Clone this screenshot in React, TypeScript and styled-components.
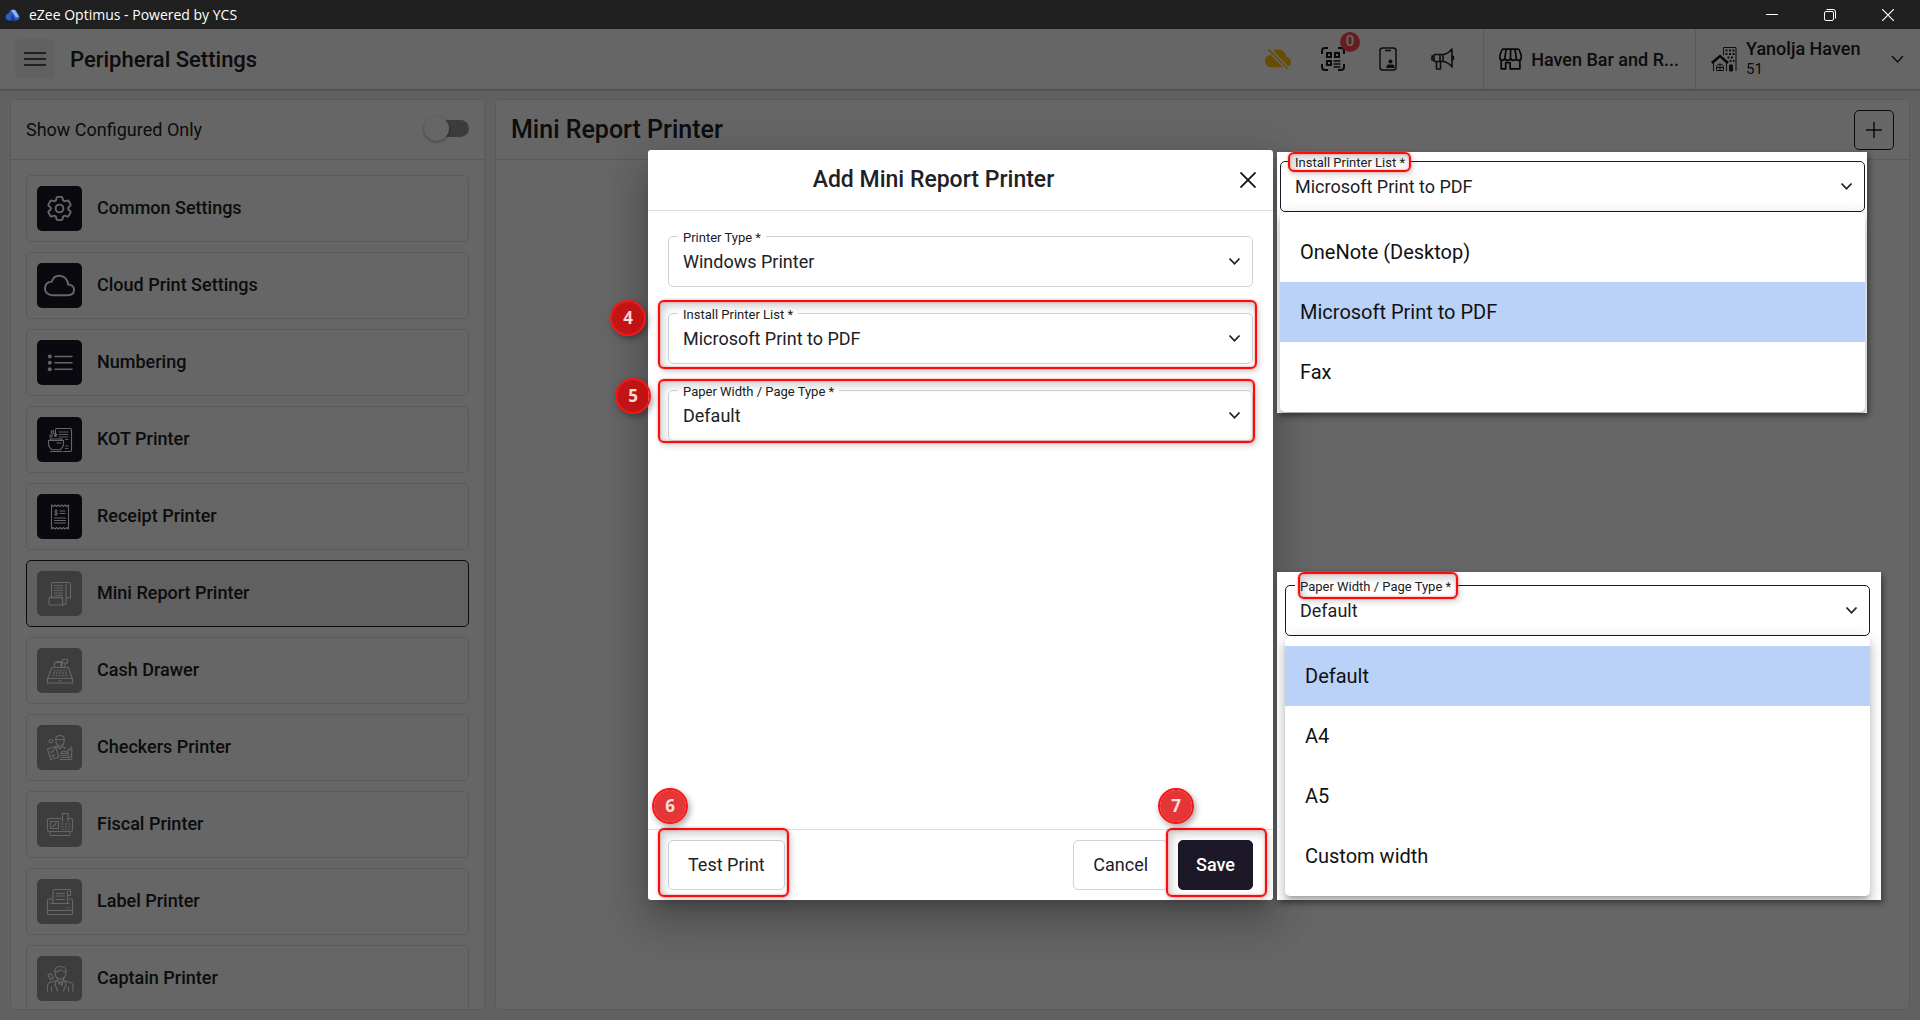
import React from "react";
import styled, { createGlobalStyle, css } from "styled-components";
import { BsCloudSlashFill } from "react-icons/bs";
import { HiOutlineCog6Tooth } from "react-icons/hi2";
import { IoCloudOutline } from "react-icons/io5";

const ink = "#1c1827";
const line = "#dee2e6";

const GlobalStyle = createGlobalStyle`
  *, *::before, *::after { box-sizing: border-box; }
  body { margin: 0; overflow: hidden; font-family: Roboto, "Liberation Sans", sans-serif; color: #202124; }
  button, input, select { font: inherit; color: inherit; }
  h1, h2, ul { margin: 0; padding: 0; }
  ul { list-style: none; }
`;

const Shell = styled.div`
  position: relative;
  display: flex;
  flex-direction: column;
  height: 100vh;
  background: #eef2f6;
`;

const TitleBar = styled.div`
  display: flex;
  align-items: center;
  flex: none;
  height: 29px;
  padding: 0 3px 0 5px;
  gap: 9px;
  background: #202020;
  color: #fff;
  font: 14px/28px "Open Sans", "Noto Sans", sans-serif;
`;

const TitleText = styled.span`
  flex: 1;
`;

const WindowControls = styled.div`
  display: flex;
`;

const WindowButton = styled.button`
  display: grid;
  place-items: center;
  width: 58px;
  height: 28px;
  padding: 0;
  border: 0;
  background: none;
`;

const Header = styled.header`
  display: flex;
  align-items: center;
  flex: none;
  height: 60px;
  padding-left: 15px;
  background: #fff;
  box-shadow: 0 1px 2px rgba(0, 0, 0, 0.3);
`;

const MenuButton = styled.button`
  display: grid;
  place-items: center;
  width: 40px;
  height: 40px;
  padding: 0;
  border: 0;
  border-radius: 5px;
  background: #f3f3f3;
`;

const PageTitle = styled.h1`
  flex: 1;
  padding-left: 15px;
  font-size: 22px;
  font-weight: 500;
`;

const HeaderIcons = styled.div`
  display: flex;
  padding-right: 13px;
`;

const HeaderIcon = styled.button`
  position: relative;
  display: grid;
  place-items: center;
  width: 55px;
  height: 60px;
  padding: 0;
  border: 0;
  background: none;
`;

const CountBadge = styled.span`
  position: absolute;
  top: 3px;
  right: 0;
  width: 20px;
  height: 20px;
  border-radius: 50%;
  background: #ff4a4f;
  color: #fff;
  font-size: 15px;
  font-weight: 500;
  line-height: 19px;
  text-align: center;
`;

const HeaderSection = styled.div<{ $width: number }>`
  display: flex;
  align-items: center;
  gap: 9px;
  width: ${(p) => p.$width}px;
  height: 60px;
  padding: 0 16px 0 15px;
  border-left: 1px solid ${line};
  font-size: 18px;
  font-weight: 500;
  white-space: nowrap;
`;

const OutletName = styled.span`
  flex: 1;
`;

const Account = styled.div`
  display: flex;
  flex-direction: column;
  flex: 1;
  line-height: 21px;
`;

const AccountCode = styled.span`
  font-size: 15px;
  font-weight: 400;
`;

const Main = styled.main`
  display: grid;
  grid-template-columns: 475px minmax(0, 1fr);
  gap: 10px;
  flex: 1;
  min-height: 0;
  padding: 10px;
`;

const Panel = styled.section`
  display: flex;
  flex-direction: column;
  min-height: 0;
  border: 1px solid ${line};
  border-radius: 5px;
  background: #fff;
  overflow: hidden;
`;

const PanelHead = styled.div`
  display: flex;
  align-items: center;
  justify-content: space-between;
  flex: none;
  height: 60px;
  padding: 0 15px;
  border-bottom: 1px solid ${line};
  font-size: 18px;
`;

const PanelTitle = styled.h2`
  font-size: 25px;
  font-weight: 500;
`;

const Switch = styled.input`
  appearance: none;
  position: relative;
  width: 40px;
  height: 17px;
  margin: 0 0 3px;
  border-radius: 9px;
  background: #979797;
  &::before {
    content: "";
    position: absolute;
    top: -4px;
    left: -5px;
    width: 25px;
    height: 25px;
    border-radius: 50%;
    background: #fff;
    box-shadow: 0 1px 3px rgba(0, 0, 0, 0.4);
  }
`;

const AddButton = styled.button`
  display: grid;
  place-items: center;
  width: 40px;
  height: 40px;
  padding: 0;
  border: 1px solid ${ink};
  border-radius: 5px;
  background: #fff;
`;

const DeviceList = styled.ul`
  display: flex;
  flex-direction: column;
  gap: 10px;
  padding: 15px;
`;

const DeviceButton = styled.button<{ $active?: boolean }>`
  display: flex;
  align-items: center;
  gap: 15px;
  width: 100%;
  height: 67px;
  padding: 0 10px;
  border: 1px solid ${(p) => (p.$active ? ink : line)};
  border-radius: 5px;
  background: ${(p) => (p.$active ? "#f0f0f0" : "#fff")};
  font-size: 18px;
  font-weight: 500;
`;

const DeviceName = styled.span`
  padding-bottom: 2px;
`;

const Tile = styled.span<{ $muted?: boolean }>`
  display: grid;
  place-items: center;
  width: 45px;
  height: 45px;
  border-radius: 5px;
  background: ${(p) => (p.$muted ? "#9a9a9a" : ink)};
  color: #fff;
`;

const Overlay = styled.div`
  position: absolute;
  inset: 29px 0 0;
  display: flex;
  justify-content: center;
  padding: 121px 0 120px 1px;
  background: rgba(0, 0, 0, 0.6);
`;

const Dialog = styled.div`
  position: relative;
  display: flex;
  flex-direction: column;
  width: 625px;
  border-radius: 3px;
  background: #fff;
  box-shadow: 0 11px 15px -7px rgba(0, 0, 0, 0.2), 0 24px 38px 3px rgba(0, 0, 0, 0.14), 0 9px 46px 8px rgba(0, 0, 0, 0.12);
`;

const DialogHead = styled.div`
  display: grid;
  grid-template-columns: 1fr 54px;
  align-items: center;
  height: 61px;
  border-bottom: 1px solid #dcdde0;
  text-align: center;
`;

const DialogTitle = styled.h2`
  font-size: 23px;
  font-weight: 500;
  line-height: 32px;
`;

const CloseButton = styled.button`
  display: grid;
  place-items: center;
  justify-self: end;
  width: 50px;
  height: 40px;
  padding: 0;
  border: 0;
  background: none;
`;

const DialogBody = styled.div`
  display: flex;
  flex-direction: column;
  flex: 1;
  gap: 26px;
  padding: 25px 20px;
`;

const DialogFoot = styled.div`
  display: flex;
  align-items: center;
  justify-content: space-between;
  height: 71px;
  padding: 0 20px;
  border-top: 1px solid #dcdde0;
`;

const ButtonGroup = styled.div`
  display: flex;
  gap: 10px;
`;

const Anchor = styled.div`
  position: relative;
`;

const ActionButton = styled.button<{ $solid?: boolean }>`
  height: 50px;
  padding: 0 ${(p) => (p.$solid ? 17 : 19)}px 2px;
  border: 1px solid ${(p) => (p.$solid ? ink : "#ced3da")};
  border-radius: 5px;
  background: ${(p) => (p.$solid ? ink : "#fff")};
  color: ${(p) => (p.$solid ? "#fff" : "#202124")};
  font-size: 18px;
  font-weight: ${(p) => (p.$solid ? 500 : 400)};
`;

const FieldBox = styled.div`
  position: relative;
  display: flex;
  align-items: center;
`;

const FieldLabel = styled.label`
  position: absolute;
  top: -6px;
  left: 10px;
  padding: 0 5px;
  background: #fff;
  font-size: 13px;
  line-height: 16px;
`;

const Select = styled.select<{ $open?: boolean }>`
  appearance: none;
  width: 100%;
  height: 51px;
  padding: 0 40px 0 14px;
  border: 1px solid ${(p) => (p.$open ? ink : "#ced3da")};
  border-radius: 5px;
  background: #fff;
  font-size: 18px;
`;

const SelectArrow = styled.svg`
  position: absolute;
  right: 12px;
  pointer-events: none;
`;

type Edges = { top: number; right: number; bottom: number; left: number };

const Highlight = styled.span<{ $edges: Edges }>`
  position: absolute;
  z-index: 1;
  ${({ $edges: e }) => css`
    top: ${-e.top}px;
    right: ${-e.right}px;
    bottom: ${-e.bottom}px;
    left: ${-e.left}px;
  `}
  border: 2px solid #f80c0c;
  border-radius: 6px;
  box-shadow: 0 0 2px #ff6a6a, 2px 3px 6px rgba(0, 0, 0, 0.16), inset 0 0 2px #ff6a6a, inset 3px 4px 10px rgba(0, 0, 0, 0.2);
  pointer-events: none;
`;

const Step = styled.span<{ $x: number; $y: number }>`
  position: absolute;
  z-index: 2;
  left: ${(p) => p.$x}px;
  top: ${(p) => p.$y}px;
  width: 36px;
  height: 36px;
  border: 2px solid #fb1212;
  border-radius: 50%;
  background: rgba(221, 0, 0, 0.79);
  background-clip: padding-box;
  box-shadow: 2px 3px 6px rgba(0, 0, 0, 0.35);
  color: rgba(255, 255, 255, 0.85);
  font: 700 17px/32px "Noto Sans", sans-serif;
  text-align: center;
`;

const Callout = styled.aside<{ $end?: boolean }>`
  position: absolute;
  left: calc(100% + 4px);
  width: ${(p) => (p.$end ? 604 : 590)}px;
  padding: ${(p) => (p.$end ? "13px 11px 4px 8px" : "9px 2px 1px 3px")};
  ${(p) => (p.$end ? "bottom: 0;" : "top: 2px;")}
  background: #fff;
  box-shadow: 2px 3px 6px rgba(0, 0, 0, 0.45);
`;

const Options = styled.ul`
  position: relative;
  padding: 10px 0;
  border-radius: 5px;
  background: #fff;
  box-shadow: 0 5px 5px -3px rgba(0, 0, 0, 0.2), 0 8px 10px 1px rgba(0, 0, 0, 0.14), 0 3px 14px 2px rgba(0, 0, 0, 0.12);
`;

const CalloutClip = styled.div`
  margin: -20px -11px -4px -8px;
  padding: 20px 11px 4px 8px;
  overflow: hidden;
`;

const ListCalloutClip = styled(CalloutClip)`
  margin: -20px -2px -1px -3px;
  padding: 20px 2px 1px 3px;
`;

const Option = styled.li<{ $selected?: boolean }>`
  height: 60px;
  padding-left: 20px;
  background: ${(p) => (p.$selected ? "#bad2f8" : "transparent")};
  color: #111;
  font-size: 20px;
  line-height: 60px;
`;

function Field({ id, label, value, options, open, edges, children }: {
  id: string;
  label: string;
  value: string;
  options: string[];
  open?: boolean;
  edges?: Edges;
  children?: React.ReactNode;
}) {
  return (
    <FieldBox>
      <Select id={id} defaultValue={value} $open={open}>
        {options.map((o) => (
          <option key={o}>{o}</option>
        ))}
      </Select>
      <FieldLabel htmlFor={id}>
        {label} *
        {open && edges && <Highlight $edges={edges} />}
      </FieldLabel>
      <SelectArrow width="13" height="9" viewBox="0 0 13 9" fill="none" stroke="#202124" strokeWidth="1.8">
        <path d="M1.5 1.5 6.5 6.8 11.5 1.5" />
      </SelectArrow>
      {!open && edges && <Highlight $edges={edges} />}
      {children}
    </FieldBox>
  );
}

const Drawing = ({ children }: { children: React.ReactNode }) => (
  <svg width="45" height="45" viewBox="0 0 45 45" fill="none" stroke="currentColor" strokeWidth="1.1" strokeLinecap="round" strokeLinejoin="round">
    {children}
  </svg>
);

const NumberingIcon = () => (
  <Drawing>
    <path d="M18 16.5h17M18 22.8h17M18 29.2h17" strokeWidth="1.5" />
    <g fill="currentColor" stroke="none">
      <circle cx="12.8" cy="16.5" r="2" />
      <circle cx="12.8" cy="22.8" r="2" />
      <circle cx="12.8" cy="29.2" r="2" />
    </g>
  </Drawing>
);

const KotIcon = () => (
  <Drawing>
    <path d="M18.5 19.5v-6.500q0-1.500 1.500-1.500h13q1.500 0 1.500 1.500v20q0 1.500-1.500 1.500h-7" />
    <path d="M22 15h9M22 17.500h9M22 20h9M28.500 22.500H31M28.500 29H31M28.500 31.500H31" strokeWidth="0.9" />
    <path d="M11.500 23.500h15v3q0 4-3.500 6.200h-8q-3.500-2.200-3.500-6.200zM13 23v-1h12v1M13.500 34.500h11M20 26h4" />
    <circle cx="15.5" cy="15" r="1.4" />
    <circle cx="18.5" cy="18" r="1.2" />
    <circle cx="14" cy="19" r="1.2" />
  </Drawing>
);

const ReceiptIcon = () => (
  <Drawing>
    <path d="M14.500 11l1.700 1.500 1.700-1.500 1.700 1.500 1.700-1.500 1.700 1.500 1.700-1.500 1.700 1.500 1.700-1.500 1.700 1.500 1.700-1.500v24l-1.700-1.500-1.700 1.500-1.700-1.500-1.700 1.500-1.700-1.500-1.700 1.500-1.700-1.500-1.700 1.500-1.700-1.500-1.700 1.500z" />
    <path d="M20.200 16.800q-2.500-.8-2.500.6t1.400 1.200 1.300 1.400-2.800.6M19 15.500v6M23 17h5M23 19.500h5M17.500 24h11M17.500 26.500h11M17.500 29h11" strokeWidth="1" />
  </Drawing>
);

const ReportIcon = () => (
  <Drawing>
    <path d="M14.500 26V13q0-1.500 1.500-1.500h16q1.500 0 1.500 1.500v14h-4.500M29 13v18.500q0 2.500-2.500 2.500H14q-2 0-2-2v-5l1.500-1 1.500 1 1.500-1 1.500 1 1.500-1 1.500 1 1.500-1 1.500 1 1.500-1v6q0 1.500 1.500 1.500" />
    <path d="M17.500 14.500h8M17.500 17h8M17.500 19.500h8M17.500 22h8M17.500 24.300h8" strokeWidth="0.9" />
  </Drawing>
);

const CashIcon = () => (
  <Drawing>
    <path d="M15 19.500h16.500l3.500 11H10.500zM10.500 30.500H35.500v4.500H10.500zM17.500 19.500v-5h6.500v5M19 13.500h6v6M25.500 11.500h5v3.500h-5zM28 15v4.500" />
    <path d="M17 22.500h13M16 25h14.500M15.500 27.500h16" strokeDasharray="1.5 1.6" strokeWidth="1.4" strokeLinecap="butt" />
    <path d="M22 32.800h1.500" />
  </Drawing>
);

const CheckerIcon = () => (
  <Drawing>
    <path d="M18.500 14.500q.5-4 4.500-4t4.500 4zM19 15v2.500q1 3.500 4 3.500t4-3.500V15M17 24.500q1-2.500 3.500-2.700l2.500 2 2.500-2q2.500.2 3 1.700" />
    <path d="M10.500 24l8-2.500 3.300 10.500-8 2.500zM14 26.500l1 1 1.500-2M15 30.500l1 1 1.500-2" />
    <path d="M24 28.500q0-2.200 3-2.200t3 2.200zM24 30.500h6M23 34.500h12M24 32.500h11M31 24.500h4l-.7 8h-2.600zM33 24l1.500-2" />
    <circle cx="13.8" cy="16" r="1.8" />
  </Drawing>
);

const FiscalIcon = () => (
  <Drawing>
    <path d="M24 16.500H12q-1.500 0-1.500 1.500v10q0 1.500 1.500 1.500h22q1.500 0 1.500-1.500V18q0-1.500-1.500-1.500h-2.500M13 29.500v2.500q0 1.500 1.500 1.500h17q1.500 0 1.500-1.500v-2.500M25.500 20v-8.500h5.500V20M13.500 19.500h8v7h-8zM16 24.500l3-3" />
    <path d="M24.500 22h9M24.500 24.500h9M24.500 27h9" strokeDasharray="2 1.4" strokeLinecap="butt" />
  </Drawing>
);

const LabelIcon = () => (
  <Drawing>
    <path d="M16 20h-4q-1.500 0-1.500 1.500v14h25v-14q0-1.500-1.500-1.500h-2M10.500 31.500h25M13.500 24.500h18.500M16 24V12q0-1.500 1.500-1.500h14.500q1.500 0 1.500 1.500v4.500h-3V12M30.500 12v12" />
    <path d="M19 14.500h8.500M19 17h8.500M19 20.500h8.500M29 28.800h.5M31.500 28.800h.5" />
  </Drawing>
);

const CaptainIcon = () => (
  <Drawing>
    <path d="M18 16.500q-.5-6 5.500-6t5.500 6q0 6-5.500 6.500-5.500-.5-5.500-6.500zM18.500 16q4-.3 5-2.500 2 2.300 5.200 2M20.500 22.500v2.500M26.500 22.500v2.500M10.500 35v-5q0-3.500 4-4l6-1.500 3 2.500 3-2.500 5.500 1.500q4 .5 4 4v5M14.500 31v4M31.500 31v4M19 25.500l-1 3 2.500 6.500M28 25.500l1 3-2.500 6.500M21.500 27.500l4-1.500v3l-4-1.500z" />
    <path d="M11 19l3-1.500 2.500 4.500-3 1.700z" />
  </Drawing>
);

const GearIcon = () => <HiOutlineCog6Tooth size={31} />;
const CloudIcon = () => <IoCloudOutline size={31} />;

const devices: { name: string; icon: () => React.ReactElement; muted?: boolean; active?: boolean }[] = [
  { name: "Common Settings", icon: GearIcon },
  { name: "Cloud Print Settings", icon: CloudIcon },
  { name: "Numbering", icon: NumberingIcon },
  { name: "KOT Printer", icon: KotIcon },
  { name: "Receipt Printer", icon: ReceiptIcon },
  { name: "Mini Report Printer", icon: ReportIcon, muted: true, active: true },
  { name: "Cash Drawer", icon: CashIcon, muted: true },
  { name: "Checkers Printer", icon: CheckerIcon, muted: true },
  { name: "Fiscal Printer", icon: FiscalIcon, muted: true },
  { name: "Label Printer", icon: LabelIcon, muted: true },
  { name: "Captain Printer", icon: CaptainIcon, muted: true },
];

const printers = ["OneNote (Desktop)", "Microsoft Print to PDF", "Fax"];
const papers = ["Default", "A4", "A5", "Custom width"];

const AppLogo = () => (
  <svg width="15" height="12" viewBox="0 0 15 12">
    <path d="M3.500 4.500Q5 .5 8 .5q3.500 0 4.500 4 2 1 2 3.500 0 3-3 3.500h-8Q.5 11 .5 8q0-2.700 3-3.500z" fill="#2a5cc4" />
    <path d="M6 1.500Q8 0 10.500 1.500L14 8l-3 .5L8 4z" fill="#8db6f2" />
    <path d="M7 5l3 6H6z" fill="#163a86" />
  </svg>
);

const QrIcon = () => (
  <svg width="24" height="24" viewBox="0 0 24 24" fill="none" stroke={ink} strokeWidth="2">
    <path d="M1 7V4q0-3 3-3h3M17 1h3q3 0 3 3v3M23 17v3q0 3-3 3h-3M7 23H4q-3 0-3-3v-3" />
    <path d="M6 6h4v4H6zM14 6h4v4h-4zM6 14h4v4H6z" />
    <path d="M12.500 14h7M12.500 17h7M12.500 20h7" strokeWidth="1.4" />
  </svg>
);

const KioskIcon = () => (
  <svg width="18" height="24" viewBox="0 0 18 24" fill="none" stroke="#202124" strokeWidth="1.5">
    <rect x="1" y="1" width="16" height="22" rx="2.5" />
    <path d="M6 3.500h6" />
    <circle cx="11.500" cy="14.5" r="2" fill="#202124" stroke="none" />
    <path d="M7.500 21v-1.500q0-2 2-2h4q2 0 2 2V21z" fill="#202124" stroke="none" />
  </svg>
);

const MegaphoneIcon = () => (
  <svg width="24" height="24" viewBox="0 0 24 24" fill="none" stroke="#202124" strokeWidth="1.6" strokeLinejoin="round">
    <path d="M4 7.500h8v7H4q-1 0-1-1v-5q0-1 1-1zM12 7.500Q17 7 21 2v18q-4-5-9-5.500M5.500 14.500V22h4v-7.500M9 7.500v7M21 9q1.500 0 1.500 2T21 13M3 9H1v4h2" />
  </svg>
);

const StoreIcon = () => (
  <svg width="26" height="24" viewBox="0 0 26 24" fill="none" stroke="#111" strokeWidth="1.9" strokeLinejoin="round">
    <path d="M5 1h16q1.500 0 2 1.500L25 8v3q0 2.500-2.800 2.500T19.500 11q0 2.500-3.200 2.500T13 11q0 2.500-3.200 2.500T6.500 11q0 2.500-2.700 2.500T1 11V8l2-5.500Q3.500 1 5 1zM8 1.500L6.500 11M13 1.500V11M18 1.500L19.500 11M2.500 13.500V23h5v-7h5v7h11v-9.500" />
  </svg>
);

const HotelIcon = () => (
  <svg width="26" height="26" viewBox="0 0 26 26" fill="none" stroke="#202124">
    <path d="M.8 17L9 10l8 7" strokeWidth="2.4" stroke="#111" />
    <path d="M2.500 17v8M15.500 17v8M12.500 9.500V1.500h12.500V25M5.500 24.500v-4q1-2.500 3.500-2.500t3.500 2.500v4zM9 18v6.500M5.500 21.500h7" />
    <path d="M14.500 4.500h9M14.500 8h9M16.500 11.500h7M18.500 15h5" strokeWidth="2" strokeDasharray="2 1.5" />
    <path d="M18.500 19h3v6h-3z" fill="#202124" />
  </svg>
);

export default function App() {
  return (
    <Shell>
      <GlobalStyle />
      <TitleBar>
        <AppLogo />
        <TitleText>eZee Optimus - Powered by YCS</TitleText>
        <WindowControls>
          <WindowButton aria-label="Minimize">
            <svg width="12" height="12" stroke="#fff"><path d="M0 5.500h12" /></svg>
          </WindowButton>
          <WindowButton aria-label="Restore">
            <svg width="12" height="12" fill="none" stroke="#fff">
              <rect x=".5" y="2.5" width="9" height="9" rx="1.5" />
              <path d="M2.500 .5h6.500q2.500 0 2.500 2.500v6.500" />
            </svg>
          </WindowButton>
          <WindowButton aria-label="Close window">
            <svg width="12" height="12" stroke="#fff" strokeWidth="1.2"><path d="M0 0l12 12M12 0L0 12" /></svg>
          </WindowButton>
        </WindowControls>
      </TitleBar>

      <Header>
        <MenuButton aria-label="Menu">
          <svg width="22" height="14" stroke="#202124" strokeWidth="1.7"><path d="M0 1h22M0 7h22M0 13h22" /></svg>
        </MenuButton>
        <PageTitle>Peripheral Settings</PageTitle>
        <HeaderIcons>
          <HeaderIcon aria-label="Offline"><BsCloudSlashFill size={26} color="#ffc107" /></HeaderIcon>
          <HeaderIcon aria-label="QR orders">
            <QrIcon />
            <CountBadge>0</CountBadge>
          </HeaderIcon>
          <HeaderIcon aria-label="Kiosk"><KioskIcon /></HeaderIcon>
          <HeaderIcon aria-label="Announcements"><MegaphoneIcon /></HeaderIcon>
        </HeaderIcons>
        <HeaderSection $width={212}>
          <StoreIcon />
          <OutletName>Haven Bar and R...</OutletName>
        </HeaderSection>
        <HeaderSection $width={225}>
          <HotelIcon />
          <Account>
            Yanolja Haven
            <AccountCode>51</AccountCode>
          </Account>
          <svg width="13" height="9" viewBox="0 0 13 9" fill="none" stroke="#202124" strokeWidth="1.5"><path d="M1 1l5.500 6L12 1" /></svg>
        </HeaderSection>
      </Header>

      <Main>
        <Panel>
          <PanelHead>
            <label htmlFor="configured">Show Configured Only</label>
            <Switch id="configured" type="checkbox" role="switch" />
          </PanelHead>
          <DeviceList>
            {devices.map(({ name, icon: Icon, muted, active }) => (
              <li key={name}>
                <DeviceButton $active={active}>
                  <Tile $muted={muted}><Icon /></Tile>
                  <DeviceName>{name}</DeviceName>
                </DeviceButton>
              </li>
            ))}
          </DeviceList>
        </Panel>
        <Panel>
          <PanelHead>
            <PanelTitle>Mini Report Printer</PanelTitle>
            <AddButton aria-label="Add printer">
              <svg width="16" height="16" stroke={ink} strokeWidth="1.5"><path d="M0 8h16M8 0v16" /></svg>
            </AddButton>
          </PanelHead>
        </Panel>
      </Main>

      <Overlay>
        <Dialog role="dialog" aria-labelledby="dialog-title">
          <DialogHead>
            <DialogTitle id="dialog-title">Add Mini Report Printer</DialogTitle>
            <CloseButton aria-label="Close">
              <svg width="16" height="16" stroke="#111" strokeWidth="1.8"><path d="M.5 .5l15 15M15.500 .5l-15 15" /></svg>
            </CloseButton>
          </DialogHead>
          <DialogBody>
            <Field id="type" label="Printer Type" value="Windows Printer" options={["Windows Printer"]} />
            <Field id="printer" label="Install Printer List" value="Microsoft Print to PDF" options={printers} edges={{ top: 13, right: 4, bottom: 5, left: 10 }}>
              <Step $x={-58} $y={-13}>4</Step>
            </Field>
            <Field id="paper" label="Paper Width / Page Type" value="Default" options={papers} edges={{ top: 11, right: 2, bottom: 2, left: 10 }}>
              <Step $x={-53} $y={-12}>5</Step>
            </Field>
          </DialogBody>
          <DialogFoot>
            <Anchor>
              <ActionButton>Test Print</ActionButton>
              <Highlight $edges={{ top: 12, right: 4, bottom: 7, left: 10 }} />
              <Step $x={-16} $y={-52}>6</Step>
            </Anchor>
            <ButtonGroup>
              <ActionButton>Cancel</ActionButton>
              <Anchor>
                <ActionButton $solid>Save</ActionButton>
                <Highlight $edges={{ top: 12, right: 14, bottom: 7, left: 12 }} />
                <Step $x={-20} $y={-52}>7</Step>
              </Anchor>
            </ButtonGroup>
          </DialogFoot>

          <Callout>
            <ListCalloutClip>
              <Field id="printer-open" label="Install Printer List" value="Microsoft Print to PDF" options={printers} open edges={{ top: 3, right: 1, bottom: 1, left: 2 }} />
              <Options role="listbox" aria-label="Installed printers">
                {printers.map((p) => (
                  <Option key={p} role="option" $selected={p === "Microsoft Print to PDF"}>{p}</Option>
                ))}
              </Options>
            </ListCalloutClip>
          </Callout>

          <Callout $end>
            <CalloutClip>
              <Field id="paper-open" label="Paper Width / Page Type" value="Default" options={papers} open edges={{ top: 7, right: 2, bottom: 4, left: -3 }} />
              <Options role="listbox" aria-label="Paper widths">
                {papers.map((p) => (
                  <Option key={p} role="option" $selected={p === "Default"}>{p}</Option>
                ))}
              </Options>
            </CalloutClip>
          </Callout>
        </Dialog>
      </Overlay>
    </Shell>
  );
}
